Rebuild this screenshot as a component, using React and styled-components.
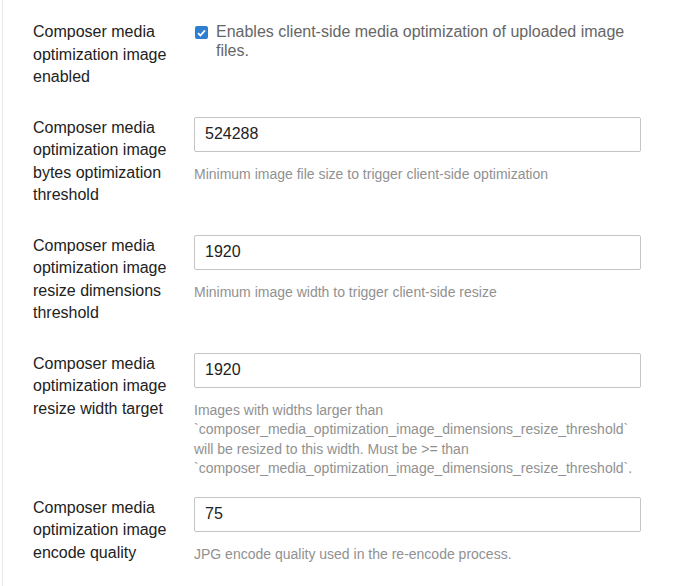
import React from "react";
import styled, { createGlobalStyle } from "styled-components";

const Global = createGlobalStyle`
  html, body { margin: 0; padding: 0; background: #fff; }
  body { font-family: "Liberation Sans", Arial, sans-serif; }
`;

const Panel = styled.div`
  margin-left: 2px;
  min-height: 586px;
  box-sizing: border-box;
  border-left: 1px solid #e8e8e8;
  padding: 21px 0 0 30px;
`;

const Row = styled.div`
  display: grid;
  grid-template-columns: 161px 447px;
  align-items: start;
  margin-bottom: 18px;
`;

const Label = styled.div`
  width: 145px;
  font-size: 16px;
  line-height: 22.5px;
  color: #222;
  padding-bottom: 10px;
`;

const Control = styled.div`
  display: flex;
  flex-direction: column;
`;

const Input = styled.input`
  box-sizing: border-box;
  width: 447px;
  height: 35px;
  border: 1px solid #c4c4c4;
  border-radius: 2px;
  padding: 0 10px;
  font-family: "Liberation Sans", Arial, sans-serif;
  font-size: 16px;
  color: #222;
  background: #fff;
  outline: none;
`;

const Help = styled.div`
  margin-top: 13px;
  font-size: 14px;
  line-height: 19.5px;
  color: #919191;
`;

const CheckLine = styled.label`
  display: flex;
  align-items: flex-start;
  gap: 8px;
  padding-top: 1px;
`;

const Box = styled.span`
  flex: none;
  width: 13px;
  height: 13px;
  margin-top: 4px;
  margin-left: 1px;
  border-radius: 2px;
  background: #2f7fd1;
  display: flex;
  align-items: center;
  justify-content: center;
`;

const CheckText = styled.span`
  font-size: 16px;
  line-height: 19px;
  color: #666;
`;

const rows = [
  {
    label: "Composer media optimization image bytes optimization threshold",
    value: "524288",
    help: "Minimum image file size to trigger client-side optimization",
  },
  {
    label: "Composer media optimization image resize dimensions threshold",
    value: "1920",
    help: "Minimum image width to trigger client-side resize",
  },
  {
    label: "Composer media optimization image resize width target",
    value: "1920",
    help:
      "Images with widths larger than `composer_media_optimization_image_dimensions_resize_threshold` will be resized to this width. Must be >= than `composer_media_optimization_image_dimensions_resize_threshold`.",
  },
  {
    label: "Composer media optimization image encode quality",
    value: "75",
    help: "JPG encode quality used in the re-encode process.",
  },
];

export default function App() {
  return (
    <>
      <Global />
      <Panel>
        <Row>
          <Label>Composer media optimization image enabled</Label>
          <Control>
            <CheckLine>
              <Box>
                <svg width="9" height="8" viewBox="0 0 9 8">
                  <path d="M1 4.2 L3.4 6.5 L8 1.4" fill="none" stroke="#fff" strokeWidth="1.8" />
                </svg>
              </Box>
              <CheckText>Enables client-side media optimization of uploaded image files.</CheckText>
            </CheckLine>
          </Control>
        </Row>
        {rows.map((r) => (
          <Row key={r.label}>
            <Label>{r.label}</Label>
            <Control>
              <Input defaultValue={r.value} />
              <Help>{r.help}</Help>
            </Control>
          </Row>
        ))}
      </Panel>
    </>
  );
}
